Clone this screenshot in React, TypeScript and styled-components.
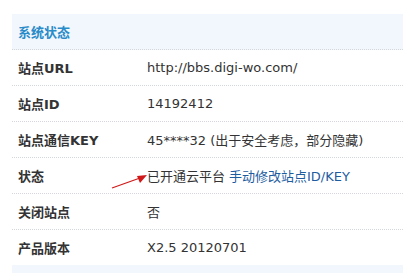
import React from "react";
import styled, { createGlobalStyle } from "styled-components";

const Global = createGlobalStyle`
  html, body { margin: 0; padding: 0; background: #fff; }
  body { font-family: "DejaVu Sans", Verdana, "Noto Sans CJK SC", sans-serif; font-size: 13px; color: #333; }
`;

const Page = styled.div`
  position: relative;
  padding: 14px 0 0 12px;
  width: 403px;
  box-sizing: border-box;
  overflow: hidden;
`;

const Table = styled.div`
  display: flex;
  flex-direction: column;
  width: 100%;
`;

const HeaderRow = styled.div`
  height: 35px;
  display: flex;
  align-items: center;
  padding-left: 6px;
  background: #f2f7fd;
  border-bottom: 1px dotted #d4d8dc;
  font-family: "DejaVu Sans", Verdana, "Noto Sans CJK SC", sans-serif;
  font-weight: bold;
  font-size: 13px;
  color: #2a8bc9;
`;

const Row = styled.div<{ $last?: boolean }>`
  height: 35px;
  display: flex;
  align-items: center;
  border-bottom: ${(p) => (p.$last ? "none" : "1px dotted #d4d8dc")};
`;

const Label = styled.div`
  width: 129px;
  padding-left: 6px;
  font-weight: bold;
  color: #333;
  font-family: "DejaVu Sans", Verdana, "Noto Sans CJK SC", sans-serif;
`;

const Value = styled.div`
  flex: 1;
  color: #333;
  white-space: nowrap;
  font-family: "DejaVu Sans", Verdana, "Noto Sans CJK SC", sans-serif;
`;

const Link = styled.a`
  color: #1d5c9f;
  text-decoration: none;
  margin-left: 4px;
`;

const Footer = styled.div`
  height: 12px;
  background: #f2f7fd;
`;

const Arrow = styled.svg`
  position: absolute;
  left: 108px;
  top: 170px;
  overflow: visible;
`;

const rows: { label: string; value: React.ReactNode }[] = [
  { label: "站点URL", value: "http://bbs.digi-wo.com/" },
  { label: "站点ID", value: "14192412" },
  { label: "站点通信KEY", value: "45****32 (出于安全考虑，部分隐藏)" },
  {
    label: "状态",
    value: (
      <>
        已开通云平台<Link href="#">手动修改站点ID/KEY</Link>
      </>
    ),
  },
  { label: "关闭站点", value: "否" },
  { label: "产品版本", value: "X2.5 20120701" },
];

export default function App() {
  return (
    <>
      <Global />
      <Page>
        <Table>
          <HeaderRow>系统状态</HeaderRow>
          {rows.map((r, i) => (
            <Row key={r.label} $last={i === rows.length - 1}>
              <Label>{r.label}</Label>
              <Value>{r.value}</Value>
            </Row>
          ))}
          <Footer />
        </Table>
        <Arrow width="40" height="24" viewBox="0 0 40 24">
          <line x1="4" y1="18" x2="32" y2="8" stroke="#d01818" strokeWidth="1.2" />
          <polygon points="29,6 32,13 39,5" fill="#d01818" />
        </Arrow>
      </Page>
    </>
  );
}
